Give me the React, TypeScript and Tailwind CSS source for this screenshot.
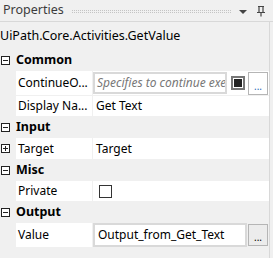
import React from 'react';

function Toggle({ open }: { open: boolean }) {
  return (
    <div className="relative w-[9px] h-[9px] border border-[#222] bg-white">
      <div className="absolute left-[1px] top-[3px] w-[5px] h-px bg-[#222]" />
      {!open && <div className="absolute left-[3px] top-[1px] w-px h-[5px] bg-[#222]" />}
    </div>
  );
}

function Category({ name }: { name: string }) {
  return (
    <div className="h-[21px] flex items-center">
      <div className="w-[16px] pl-[1px]">
        <Toggle open />
      </div>
      <span className="font-bold text-[12.5px] text-black">{name}</span>
    </div>
  );
}

function Row({
  label,
  children,
  expander,
  height = 'h-[21px]',
}: {
  label: string;
  children?: React.ReactNode;
  expander?: boolean;
  height?: string;
}) {
  return (
    <div className={`flex ${height} border-b border-[#f0f0f0]`}>
      <div className="w-[16px] flex items-center pl-[1px]">{expander && <Toggle open={false} />}</div>
      <div className="w-[76px] bg-white flex items-center pl-[2px] whitespace-nowrap overflow-hidden">{label}</div>
      <div className="w-px" />
      <div className="flex-1 bg-white flex items-center min-w-0">{children}</div>
    </div>
  );
}

export default function App() {
  return (
    <div
      className="w-[273px] h-[258px] bg-[#f0f0f0] text-[12px] text-black overflow-hidden"
      style={{ fontFamily: '"Noto Sans", "Segoe UI", sans-serif' }}
    >
      <div className="h-[22px] flex items-center border-b border-[#d8d8d8]">
        <span className="pl-[3px] pr-[8px] text-[#3c3c3c] text-[12.5px]">Properties</span>
        <div className="flex-1 h-[3px] mt-[1px] border-y border-dotted border-[#c4c4c4]" />
        <div className="w-[24px] flex justify-center">
          <div className="w-0 h-0 border-l-[4px] border-r-[4px] border-t-[4px] border-l-transparent border-r-transparent border-t-[#444] mt-[2px]" />
        </div>
        <svg width="12" height="12" viewBox="0 0 12 12" className="mr-[6px]">
          <path d="M3 1.5h6M4 1.5v6M8 1.5v6M2 7.5h8M6 7.5v4" stroke="#444" strokeWidth="1.2" fill="none" />
        </svg>
      </div>
      <div className="flex h-[236px]">
        <div className="w-[270px] border-r border-[#d8d8d8]">
          <div className="h-[28px] flex items-center pt-[1px] text-[12.5px]">UiPath.Core.Activities.GetValue</div>
          <Category name="Common" />
          <Row label="ContinueO..." height="h-[25px]">
            <div className="flex items-center w-full bg-white h-full">
              <div className="flex-1 h-[22px] border-2 border-[#d9d9d9] flex items-center pl-[2px] overflow-hidden whitespace-nowrap italic text-[#777]">
                Specifies to continue exe
              </div>
              <div className="ml-[4px] w-[14px] h-[14px] border-2 border-[#777] flex items-center justify-center">
                <div className="w-[8px] h-[8px] bg-[#222]" />
              </div>
              <div className="ml-[3px] mr-[1px] w-[20px] h-[23px] border border-[#b5b5b5] bg-white flex items-end justify-center pb-[3px] text-[10px] leading-none text-[#2a6bb8]">
                ...
              </div>
            </div>
          </Row>
          <Row label="Display Na...">
            <span className="pl-[3px]">Get Text</span>
          </Row>
          <Category name="Input" />
          <Row label="Target" expander height="h-[22px]">
            <span className="pl-[3px]">Target</span>
          </Row>
          <Category name="Misc" />
          <Row label="Private">
            <div className="ml-[6px] w-[13px] h-[13px] border border-[#333] bg-white" />
          </Row>
          <Category name="Output" />
          <Row label="Value" height="h-[25px]">
            <div className="flex items-center w-full h-full bg-[#f0f0f0]">
              <div className="flex-1 h-[24px] border-2 border-[#d9d9d9] bg-white flex items-center pl-[3px] overflow-hidden whitespace-nowrap">
                Output_from_Get_Text
              </div>
              <div className="ml-px mr-[1px] w-[20px] h-[22px] border border-[#b5b5b5] bg-[#ececec] flex items-end justify-center pb-[3px] text-[10px] leading-none text-black">
                ...
              </div>
            </div>
          </Row>
        </div>
      </div>
    </div>
  );
}
